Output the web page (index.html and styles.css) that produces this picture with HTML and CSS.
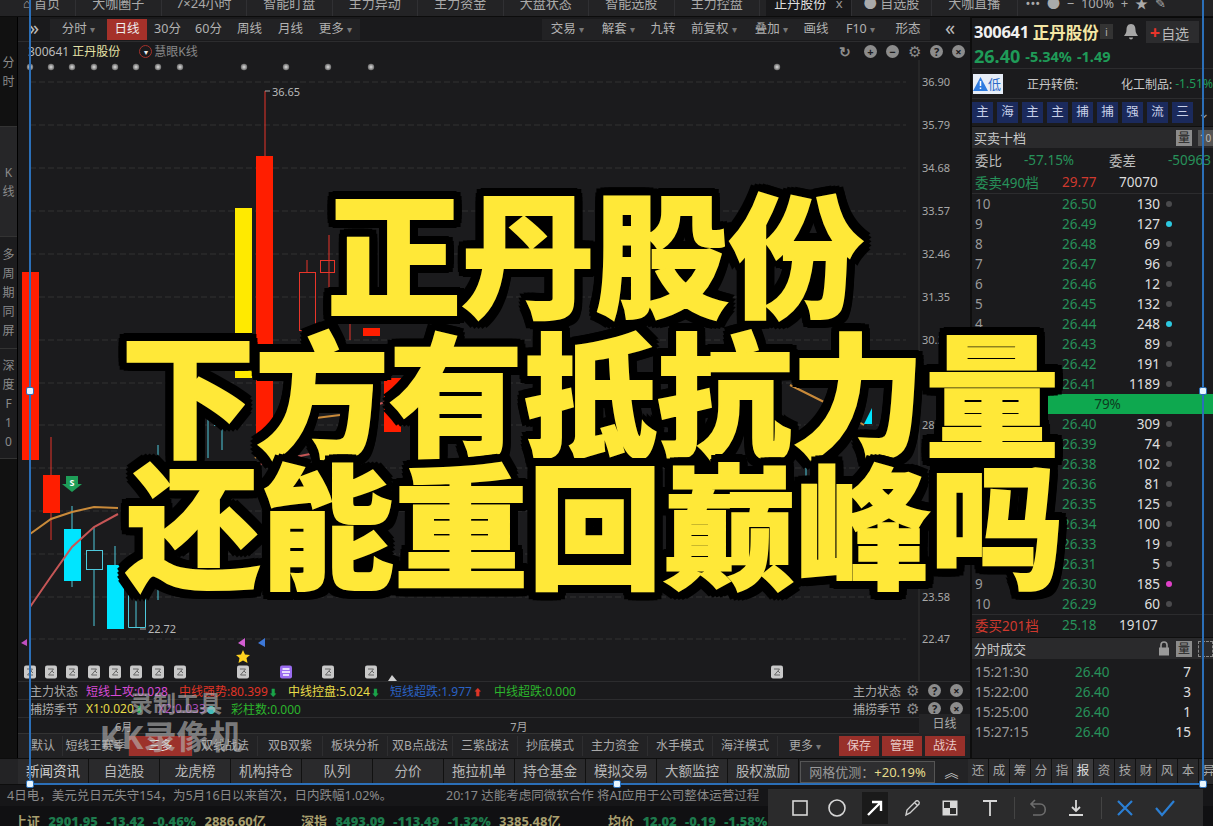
FILE: index.html
```html
<!DOCTYPE html>
<html lang="zh">
<head>
<meta charset="utf-8">
<title>正丹股份</title>
<link rel="stylesheet" href="styles.css">
</head>
<body>
<div class="app">
  <nav class="topbar">
    <span class="top-tab t-home">⌂ 首页</span><span class="top-tab">大咖圈子</span><span class="top-tab">7×24小时</span><span class="top-tab">智能盯盘</span><span class="top-tab">主力异动</span><span class="top-tab">主力资金</span><span class="top-tab">大盘状态</span><span class="top-tab">智能选股</span><span class="top-tab">主力控盘</span><span class="top-tab t-active">正丹股份 <i>x</i></span><span class="top-tab t-fav">● 自选股</span><span class="top-tab">大咖直播</span>
    <span class="top-ctl">••• &nbsp;● &nbsp;− &nbsp;100% &nbsp;+ &nbsp;★ &nbsp;✎</span>
  </nav>
  <div class="main">
    <aside class="rail">
      <div class="rail-item r-1">分<br>时</div>
      <div class="rail-item r-2">K<br>线</div>
      <div class="rail-item r-3">多<br>周<br>期<br>同<br>屏</div>
      <div class="rail-item r-4">深<br>度<br>F<br>1<br>0</div>
    </aside>
    <section class="center">
      <div class="toolbar">
        <span class="tb tb-chev">»</span>
        <span class="tb tb-w56">分时 <b>▾</b></span><span class="tb tb-on">日线</span><span class="tb">30分</span><span class="tb">60分</span><span class="tb">周线</span><span class="tb">月线</span><span class="tb tb-w49">更多 <b>▾</b></span>
        <span class="tb-space"></span>
        <span class="tb tb-w51">交易 <b>▾</b></span><span class="tb tb-w51">解套 <b>▾</b></span><span class="tb tb-w38">九转</span><span class="tb tb-w64">前复权 <b>▾</b></span><span class="tb tb-w51">叠加 <b>▾</b></span><span class="tb tb-w38">画线</span><span class="tb tb-w51">F10 <b>▾</b></span><span class="tb tb-w44">形态</span><span class="tb tb-chev2">«</span>
      </div>
      <div class="chart-head">
        <span class="code">300641 <em>正丹股份</em></span>
        <span class="eye">▾</span><span class="eye-label">慧眼K线</span>
        <span class="head-space"></span>
        <span class="ic ic-plain">↻</span><span class="ic">+</span><span class="ic">−</span><span class="ic ic-gear">⚙</span><span class="ic">?</span><span class="ic ic-end">×</span>
      </div>
      <svg class="chart" viewBox="18 60 952 621" width="952" height="621" xmlns="http://www.w3.org/2000/svg">
        <defs>
          <g id="note"><rect x="-6" y="-6.500" width="12" height="13" rx="2" fill="#c9c9c9"/><path d="M-3 -3H2.500L-2.500 3H3M1 -1L3 1" fill="none" stroke="#666" stroke-width="1"/></g>
          <radialGradient id="dotg"><stop offset="0" stop-color="#e0e0e0"/><stop offset="1" stop-color="#6a6a6a"/></radialGradient>
        </defs>
        <g class="grid">
          <path d="M30 82H906M30 125H906M30 168H906M30 211H906M30 254H906M30 297H906M30 340H906M30 383H906M30 425H906M30 468H906M30 511H906M30 554H906M30 597H906M30 639H906"/>
        </g>
        <path d="M919 60V682" stroke="#333" fill="none"/>
        <g class="prices">
          <text x="922" y="86">36.90</text><text x="922" y="129">35.79</text><text x="922" y="172">34.68</text><text x="922" y="215">33.57</text><text x="922" y="258">32.46</text><text x="922" y="301">31.35</text><text x="922" y="344">30.24</text><text x="922" y="429">28.02</text><text x="922" y="601">23.58</text><text x="922" y="643">22.47</text>
        </g>
        <g fill="url(#dotg)">
          <circle cx="30" cy="67" r="3.200"/><circle cx="51" cy="67" r="3.200"/><circle cx="72" cy="67" r="3.200"/><circle cx="94" cy="67" r="3.200"/><circle cx="115" cy="67" r="3.200"/><circle cx="136" cy="67" r="3.200"/><circle cx="158" cy="67" r="3.200"/><circle cx="180" cy="67" r="3.200"/><circle cx="244" cy="67" r="3.200"/><circle cx="286" cy="67" r="3.200"/><circle cx="328" cy="67" r="3.200"/><circle cx="371" cy="67" r="3.200"/><circle cx="777" cy="67" r="3.200"/>
        </g>
        <!-- red candles -->
        <path d="M51 437V540M265 91V156M329 235V290M307 260V272M350 320V340" stroke="#e8352a" fill="none"/>
        <path d="M265 91H270" stroke="#aaa" fill="none"/>
        <text class="mark" x="272" y="96">36.65</text>
        <rect x="22" y="272" width="17" height="188" fill="#ff1e00"/>
        <rect x="43" y="475" width="17" height="38" fill="#ff1e00"/>
        <rect x="235" y="208" width="17" height="170" fill="#ffea00"/>
        <rect x="256" y="156" width="17" height="300" fill="#ff1e00"/>
        <rect x="299.500" y="272.500" width="16" height="58" fill="none" stroke="#e8352a"/>
        <rect x="320.500" y="260.500" width="14" height="12" fill="none" stroke="#e8352a"/>
        <rect x="363" y="328" width="17" height="8" fill="#ff1e00"/>
        <rect x="384" y="378" width="17" height="54" fill="#ff1e00"/>
        <!-- cyan candles -->
        <path d="M72 506V587M94 527V626M115 546V600M158 445V600M208 416V458M222 427V450M136 560V628M790 450V480" stroke="#4ec9dc" fill="none"/>
        <rect x="64" y="529" width="17" height="52" fill="#00e5ff"/>
        <rect x="86.500" y="550.500" width="16" height="19" fill="#1b1b1d" stroke="#4ec9dc"/>
        <rect x="107" y="565" width="17" height="64" fill="#00e5ff"/>
        <path d="M128.500 590V627.500H145.500V590" fill="none" stroke="#4ec9dc"/>
        <path d="M214 425.500H222M790 458.500H806V480" fill="none" stroke="#4ec9dc"/>
        <path d="M864 424L872 408V424Z" fill="#00e5ff"/>
        <!-- moving averages -->
        <path d="M30 534L51 519L72 512L94 507L118 508" fill="none" stroke="#c98a3a" stroke-width="2"/>
        <path d="M30 607L50 578L72 547L94 527L118 514" fill="none" stroke="#c65656" stroke-width="2"/>
        <path d="M255 458L300 420L340 415M790 385L830 405L864 425" fill="none" stroke="#c98a3a" stroke-width="2"/>
        <path d="M255 465L320 452M340 415L400 398" fill="none" stroke="#c65656" stroke-width="2"/>
        <text class="mark" x="148" y="633">22.72</text>
        <path d="M146 629H140" stroke="#aaa" fill="none"/>
        <!-- markers -->
        <path d="M66 476H78V484H82L72 492L62 484H66Z" fill="#1e9e58"/>
        <text class="s-mark" x="72" y="486">S</text>
        <path d="M27 639V646L21 643Z" fill="#c04fc0"/>
        <path d="M245 638V647L238 643Z" fill="#d35ed3"/>
        <path d="M265 638V647L258 643Z" fill="#3d78d8"/>
        <path d="M243 650L245 654.500L250 655L246.500 658L247.500 663L243 660.500L238.500 663L239.500 658L236 655L241 654.500Z" fill="#ffd21f"/>
        <path d="M388 681L392 675L397 681Z" fill="#cfcfcf"/>
        <g>
          <use href="#note" x="30" y="672"/><use href="#note" x="51" y="672"/><use href="#note" x="72" y="672"/><use href="#note" x="94" y="672"/><use href="#note" x="115" y="672"/><use href="#note" x="136" y="672"/><use href="#note" x="158" y="672"/><use href="#note" x="180" y="672"/><use href="#note" x="243" y="672"/><use href="#note" x="328" y="672"/><use href="#note" x="371" y="672"/><use href="#note" x="777" y="672"/>
          <rect x="280" y="665.500" width="12" height="13" rx="2" fill="#9a6cf0"/><path d="M282.500 669H289.500M282 672H290M283 675H289" stroke="#fff" fill="none" stroke-width="1.300"/>
        </g>
      </svg>
      <div class="ind ind-1">
        <span class="ind-name">主力状态</span>
        <span class="v w93 c-pink">短线上攻:0.028</span>
        <span class="v w109 c-red">中线强势:80.399<b class="c-green">⬇</b></span>
        <span class="v w102 c-yellow">中线控盘:5.024<b class="c-green">⬇</b></span>
        <span class="v w104 c-blue">短线超跌:1.977<b class="c-red">⬆</b></span>
        <span class="v c-lime">中线超跌:0.000</span>
        <span class="ind-right">主力状态<i class="ic ic-gear">⚙</i><i class="ic">?</i><i class="ic">×</i></span>
      </div>
      <div class="ind ind-2">
        <span class="ind-name">捕捞季节</span>
        <span class="v w72 c-yellow">X1:0.020<b class="c-green">⬇</b></span>
        <span class="v w73 c-purple">X2:0.033<b class="c-cyan">●</b></span>
        <span class="v c-lime">彩柱数:0.000</span>
        <span class="ind-right">捕捞季节<i class="ic ic-gear">⚙</i><i class="ic">?</i><i class="ic">×</i></span>
      </div>
      <div class="dates"><span class="d-6">6月</span><span class="d-7">7月</span><span class="d-unit">日线</span></div>
      <div class="strategy">
        <span class="st st-s">默认</span><span class="st st-l">短线王赛季</span><span class="st st-red">三多</span><span class="st">双线战法</span><span class="st">双B双紫</span><span class="st">板块分析</span><span class="st">双B点战法</span><span class="st">三紫战法</span><span class="st">抄底模式</span><span class="st">主力资金</span><span class="st">水手模式</span><span class="st">海洋模式</span><span class="st st-more">更多 <b>▾</b></span>
        <span class="st-btn">保存</span><span class="st-btn">管理</span><span class="st-btn">战法</span>
      </div>
    </section>
    <aside class="side">
      <div class="quote-head">
        <span class="q-code">300641</span><span class="q-name">正丹股份</span><span class="q-i">i</span>
        <svg class="q-bell" width="16" height="18" viewBox="0 0 16 18"><path d="M8 1C4.500 1 3.500 4 3.500 7C3.500 10 2 11.500 1 13H15C14 11.500 12.500 10 12.500 7C12.500 4 11.500 1 8 1ZM6 14.500H10C10 17 6 17 6 14.500Z" fill="#a6a6a6"/></svg>
        <span class="q-add"><b>+</b>自选</span>
      </div>
      <div class="quote-price"><span class="p-big">26.40</span><span class="p-sub">-5.34%</span><span class="p-sub">-1.49</span></div>
      <div class="info-row">
        <span class="risk"><svg width="15" height="14" viewBox="0 0 15 14"><path d="M7.500 0L15 14H0Z" fill="#2e7be0"/><path d="M7.500 4V9M7.500 10.500V12" stroke="#fff" stroke-width="1.500"/></svg>低</span>
        <span class="info-a">正丹转债:</span><span class="info-b">化工制品:</span><span class="info-c">-1.51%</span>
      </div>
      <div class="tags">
        <span>主</span><span>海</span><span>主</span><span>主</span><span>捕</span><span>捕</span><span>强</span><span>流</span><span>三</span><i>⌄</i>
      </div>
      <div class="sec-head"><span>买卖十档</span><span class="sec-tools"><b>量</b><b class="b-cut">10</b></span></div>
      <div class="wei"><span>委比</span><span class="g w-1">-57.15%</span><span class="w-2">委差</span><span class="g w-3">-50963</span></div>
      <div class="lvl"><span class="g lvl-a">委卖490档</span><span class="r lvl-b">29.77</span><span class="lvl-c">70070</span></div>
      <div class="book">
        <div class="ob"><span>10</span><span class="g">26.50</span><span class="q">130</span><i></i></div>
        <div class="ob"><span>9</span><span class="g">26.49</span><span class="q">127</span><i class="cy"></i></div>
        <div class="ob"><span>8</span><span class="g">26.48</span><span class="q">69</span><i></i></div>
        <div class="ob"><span>7</span><span class="g">26.47</span><span class="q">96</span><i></i></div>
        <div class="ob"><span>6</span><span class="g">26.46</span><span class="q">12</span><i></i></div>
        <div class="ob"><span>5</span><span class="g">26.45</span><span class="q">132</span><i></i></div>
        <div class="ob"><span>4</span><span class="g">26.44</span><span class="q">248</span><i class="cy"></i></div>
        <div class="ob"><span>3</span><span class="g">26.43</span><span class="q">89</span><i></i></div>
        <div class="ob"><span>2</span><span class="g">26.42</span><span class="q">191</span><i></i></div>
        <div class="ob"><span>1</span><span class="g">26.41</span><span class="q">1189</span><i></i></div>
        <div class="ratio">79%</div>
        <div class="ob"><span>1</span><span class="g">26.40</span><span class="q">309</span><i></i></div>
        <div class="ob"><span>2</span><span class="g">26.39</span><span class="q">74</span><i></i></div>
        <div class="ob"><span>3</span><span class="g">26.38</span><span class="q">102</span><i></i></div>
        <div class="ob"><span>4</span><span class="g">26.36</span><span class="q">81</span><i></i></div>
        <div class="ob"><span>5</span><span class="g">26.35</span><span class="q">125</span><i></i></div>
        <div class="ob"><span>6</span><span class="g">26.34</span><span class="q">100</span><i></i></div>
        <div class="ob"><span>7</span><span class="g">26.33</span><span class="q">19</span><i></i></div>
        <div class="ob"><span>8</span><span class="g">26.31</span><span class="q">5</span><i></i></div>
        <div class="ob"><span>9</span><span class="g">26.30</span><span class="q">185</span><i class="pk"></i></div>
        <div class="ob"><span>10</span><span class="g">26.29</span><span class="q">60</span><i></i></div>
      </div>
      <div class="lvl lvl-buy"><span class="r lvl-a">委买201档</span><span class="g lvl-b">25.18</span><span class="lvl-c">19107</span></div>
      <div class="sec-head sec-2"><span>分时成交</span><span class="sec-tools"><svg width="12" height="15" viewBox="0 0 12 15"><path d="M3 7V4C3 0 9 0 9 4V7" fill="none" stroke="#9a9a9a" stroke-width="1.600"/><rect x="1" y="6.500" width="10" height="8" fill="#9a9a9a"/></svg><b>量</b><b class="b-cut"></b></span></div>
      <div class="trades">
        <div class="tr"><span>15:21:30</span><span class="g">26.40</span><span class="q">7</span></div>
        <div class="tr"><span>15:22:00</span><span class="g">26.40</span><span class="q">3</span></div>
        <div class="tr"><span>15:25:00</span><span class="g">26.40</span><span class="q">1</span></div>
        <div class="tr"><span>15:27:15</span><span class="g">26.40</span><span class="q">15</span></div>
      </div>
    </aside>
  </div>
  <div class="tabs">
    <span class="tab tab-first">新闻资讯</span><span class="tab">自选股</span><span class="tab">龙虎榜</span><span class="tab">机构持仓</span><span class="tab">队列</span><span class="tab">分价</span><span class="tab">拖拉机单</span><span class="tab">持仓基金</span><span class="tab">模拟交易</span><span class="tab">大额监控</span><span class="tab">股权激励</span>
    <span class="grid-opt">网格优测：<b>+20.19%</b></span><span class="tab-up">︽</span>
    <span class="letters"><span>还</span><span>成</span><span>筹</span><span>分</span><span>指</span><span class="l-on">报</span><span>资</span><span>技</span><span>财</span><span>风</span><span>本</span><span>异</span></span>
  </div>
  <div class="ticker"><span class="tk-a">4日电，美元兑日元失守154，为5月16日以来首次，日内跌幅1.02%。</span><span>20:17 达能考虑同微软合作 将AI应用于公司整体运营过程</span></div>
  <div class="indices">
    <span class="idx idx-1"><em>上证</em> <b>2901.95</b> <b>-13.42</b> <b>-0.46%</b> <u>2886.60亿</u></span>
    <span class="idx idx-2"><em>深指</em> <b>8493.09</b> <b>-113.49</b> <b>-1.32%</b> <u>3385.48亿</u></span>
    <span class="idx"><em>均价</em> <b>12.02</b> <b>-0.19</b> <b>-1.58%</b></span>
  </div>

  <div class="watermark"><div class="wm-1">录制工具</div><div class="wm-2">KK录像机</div></div>
  <div class="headline">
    <div class="hl-1">正丹股份</div>
    <div class="hl-2">下方有抵抗力量</div>
    <div>还能重回巅峰吗</div>
  </div>
  <div class="selection">
    <i class="hd hd-l"></i><i class="hd hd-r"></i><i class="hd hd-bl"></i><i class="hd hd-b"></i><i class="hd hd-br"></i>
  </div>
  <div class="recorder">
    <svg width="16" height="16" viewBox="0 0 16 16"><rect x="1" y="1" width="14" height="14" fill="none" stroke="#d8d8d8" stroke-width="1.600"/></svg>
    <svg width="18" height="18" viewBox="0 0 18 18"><circle cx="9" cy="9" r="8" fill="none" stroke="#d8d8d8" stroke-width="1.600"/></svg>
    <span class="rec-on"><svg width="18" height="18" viewBox="0 0 18 18"><path d="M2 16L15 3M6 3H15V12" fill="none" stroke="#fff" stroke-width="2.400"/></svg></span>
    <svg width="18" height="18" viewBox="0 0 18 18"><path d="M2 16L3 11L12 2C14 1 16 3 15 5L6 14Z M10.500 3.500L13.500 6.500" fill="none" stroke="#cfcfcf" stroke-width="1.400"/></svg>
    <svg width="16" height="16" viewBox="0 0 16 16"><rect x="0.500" y="0.500" width="15" height="15" fill="#d8d8d8"/><rect x="2" y="2" width="6" height="6" fill="#2b2b2b"/><rect x="8" y="8" width="6" height="6" fill="#2b2b2b"/></svg>
    <svg class="rec-t" width="16" height="17" viewBox="0 0 16 17"><path d="M1 2H15M8 2V17" fill="none" stroke="#d8d8d8" stroke-width="1.800"/></svg>
    <i class="rec-sep"></i>
    <svg width="18" height="18" viewBox="0 0 18 18"><path d="M6 1L2 5L6 9M2 5H11C18 5 18 16 11 16H4" fill="none" stroke="#6d6d6d" stroke-width="1.600"/></svg>
    <svg width="18" height="18" viewBox="0 0 18 18"><path d="M9 1V11M5 8L9 12L13 8M2 16H16" fill="none" stroke="#d8d8d8" stroke-width="1.800"/></svg>
    <i class="rec-sep"></i>
    <svg width="18" height="18" viewBox="0 0 18 18"><path d="M2 2L16 16M16 2L2 16" fill="none" stroke="#2b7fd4" stroke-width="2.200"/></svg>
    <svg width="22" height="18" viewBox="0 0 22 18"><path d="M2 9L8 16L20 2" fill="none" stroke="#2b7fd4" stroke-width="2.200"/></svg>
  </div>
</div>
</body>
</html>
```

FILE: styles.css
```css
* { box-sizing: border-box; }
html, body { margin: 0; padding: 0; background: #1a1a1c; }
body { font-family: "Noto Sans", "Noto Sans CJK SC", sans-serif; font-size: 12px; color: #bdbdbd; }
i, em { font-style: normal; }
.app { position: relative; width: 1213px; height: 826px; overflow: hidden; display: flex; flex-direction: column; background: #1a1a1c; }

/* top tabs */
.topbar { flex: none; height: 17px; display: flex; background: #232325; border-bottom: 1px solid #0c0c0c; overflow: hidden; }
.top-tab { width: 85.500px; flex: none; line-height: 7px; font-size: 13px; text-align: center; color: #aaa; border-right: 1px solid #303033; }
.t-home { width: 76px; padding-left: 8px; }
.t-active { background: #18181a; color: #ddd; width: 86px; margin-left: 6px; }
.t-active i { color: #999; margin-left: 6px; }
.t-fav { width: 80px; }
.top-ctl { margin-left: 8px; line-height: 7px; color: #aaa; font-size: 13px; white-space: nowrap; }

/* main */
.main { flex: none; height: 741px; display: flex; }
.rail { flex: none; width: 18px; background: #111; border-right: 1px solid #000; color: #8a8a8a; font-size: 12px; text-align: center; line-height: 19px; display: flex; flex-direction: column; }
.rail-item { display: flex; align-items: center; justify-content: center; border-bottom: 1px solid #333; }
.r-1 { height: 110px; }
.r-2 { height: 110px; background: #262628; }
.r-3 { height: 112px; background: #1c1c1e; }
.r-4 { height: 110px; background: #1c1c1e; }

.center { flex: none; width: 952px; display: flex; flex-direction: column; }
.toolbar { flex: none; height: 25px; display: flex; align-items: center; border-bottom: 1px solid #2c2c2e; padding-top: 1px; }
.tb { flex: none; width: 41px; height: 21px; line-height: 20px; text-align: center; color: #b2b2b2; font-size: 12.500px; white-space: nowrap; background: #222224; }
.tb b { color: #777; font-size: 10px; font-weight: 400; }
.tb-chev { width: 32px; background: none; font-size: 20px; line-height: 17px; color: #bbb; }
.tb-w56 { width: 57px; }
.tb-w49 { width: 49px; }
.tb-on { background: #a5312a; color: #eee; width: 40px; }
.tb-space { flex: 1; }
.tb-w51 { width: 51px; }
.tb-w38 { width: 38px; }
.tb-w64 { width: 64px; }
.tb-w44 { width: 44px; }
.tb-chev2 { width: 40px; background: none; font-size: 20px; line-height: 17px; color: #bbb; }

.chart-head { flex: none; height: 18px; display: flex; align-items: center; padding-left: 10px; font-size: 12px; color: #aaa; }
.code { color: #bbb; }
.code em { color: #e6e2a6; }
.eye { width: 13px; height: 13px; margin-left: 19px; border: 1px solid #a5312a; border-radius: 50%; color: #eee; font-size: 8px; line-height: 11px; text-align: center; }
.eye-label { margin-left: 2px; color: #888; }
.head-space { flex: 1; }
.ic { display: inline-block; flex: none; width: 13px; height: 13px; margin-right: 9px; border-radius: 50%; background: #8c8c8c; color: #1a1a1c; font-size: 11px; line-height: 13px; text-align: center; font-weight: 700; }
.ic-plain { background: none; color: #8c8c8c; font-size: 14px; margin-right: 13px; }
.ic-gear { background: none; color: #8c8c8c; font-size: 15px; font-weight: 400; }
.ic-end { margin-right: 5px; }
.chart { flex: none; display: block; background: #1b1b1d; }
.grid path { stroke: #333; stroke-dasharray: 6 3; fill: none; }
.prices text { fill: #a8a8a8; font-size: 11px; font-family: "Noto Sans", sans-serif; }
.mark { fill: #b8b8b8; font-size: 11px; font-family: "Noto Sans", sans-serif; }
.s-mark { fill: #fff; font-size: 9px; font-weight: 700; text-anchor: middle; font-family: "Noto Sans", sans-serif; }

.ind { flex: none; height: 18px; display: flex; align-items: center; padding-left: 12px; border-top: 1px solid #2c2c2e; font-size: 12px; white-space: nowrap; }
.ind-name { width: 56px; flex: none; color: #aaa; }
.v b { font-size: 9px; margin-left: 1px; }
.w93 { width: 93px; } .w109 { width: 109px; } .w102 { width: 102px; } .w104 { width: 104px; } .w72 { width: 72px; } .w73 { width: 73px; }
.ind-right { margin-left: auto; color: #aaa; display: flex; align-items: center; padding-right: 7px; }
.ind-right .ic { margin-left: 9px; margin-right: 0; }
.ind-right .ic-gear { margin-left: 5px; }
.c-pink { color: #d84bd8; } .c-red { color: #e03426; } .c-green { color: #19a34a; } .c-yellow { color: #e8dc48; } .c-blue { color: #2a62c4; } .c-lime { color: #2cb52c; } .c-purple { color: #a74bb8; } .c-cyan { color: #4bb; }

.dates { flex: none; height: 16px; position: relative; border-top: 1px solid #2c2c2e; font-size: 11px; color: #aaa; display: flex; align-items: center; line-height: 12px; }
.d-6 { margin-left: 97px; padding-top: 3px; }
.d-7 { margin-left: 378px; padding-top: 3px; }
.d-unit { margin-left: auto; width: 51px; height: 20px; margin-top: -4px; background: #242426; text-align: center; line-height: 20px; font-size: 12px; }

.strategy { flex: 1; display: flex; align-items: center; background: #222224; border-top: 1px solid #333; padding-left: 6px; font-size: 12px; white-space: nowrap; }
.st { width: 65px; flex: none; text-align: center; color: #aaa; border-right: 1px solid #2e2e30; line-height: 20px; }
.st-s { width: 39px; }
.st-l { width: 66px; }
.st-red { width: 64px; background: #9c312b; color: #eee; }
.st-more { width: 54px; border: 0; }
.st-more b { font-size: 10px; font-weight: 400; color: #777; }
.st-btn { flex: none; width: 40px; height: 20px; margin-left: 3px; background: #98302a; color: #e8c9c6; text-align: center; line-height: 20px; }
.st-more + .st-btn { margin-left: 7px; }

/* side */
.side { flex: none; width: 243px; background: #1b1b1d; border-left: 2px solid #0d0d0d; overflow: hidden; font-size: 14px; }
.quote-head { height: 28px; display: flex; align-items: center; padding-left: 2px; border-top: 1px solid #0a0a0a; }
.q-code { font-weight: 700; font-size: 16.500px; color: #f0f0f0; letter-spacing: -0.300px; }
.q-name { font-weight: 700; font-size: 16.500px; color: #f4e7a4; margin-left: 4px; }
.q-i { width: 13px; height: 15px; margin-left: 1px; flex: none; background: #333; color: #aaa; font-size: 11px; line-height: 15px; text-align: center; }
.q-bell { margin-left: 10px; flex: none; }
.q-add { margin-left: 7px; width: 53px; height: 22px; flex: none; background: #2c2c2e; color: #b8b8b8; line-height: 22px; font-size: 14px; white-space: nowrap; padding-left: 4px; }
.q-add b { color: #e8352a; font-size: 18px; margin-right: 1px; }
.quote-price { height: 22px; display: flex; align-items: center; gap: 5px; padding-left: 2px; color: #1f9b58; font-weight: 700; }
.p-big { font-size: 18px; }
.p-sub { font-size: 14.500px; }
.info-row { height: 31px; margin-top: 1px; display: flex; align-items: center; border-top: 1px solid #2c2c2e; border-bottom: 1px solid #2c2c2e; font-size: 12px; color: #c8c8c8; white-space: nowrap; }
.risk { width: 30px; height: 20px; margin-left: 1px; background: #e6edf7; color: #2e6bc8; display: flex; align-items: center; font-size: 13px; }
.info-a { margin-left: 24px; width: 94px; }
.info-c { color: #1f9b58; margin-left: 3px; }
.tags { height: 27px; display: flex; align-items: center; padding-left: 0; gap: 4px; }
.tags span { flex: none; width: 21px; height: 21px; background: #1b2a5c; color: #c8d0e8; font-size: 12.500px; text-align: center; line-height: 20px; }
.tags i { color: #999; font-size: 14px; margin-left: 1px; }
.sec-head { height: 22px; display: flex; align-items: center; justify-content: space-between; padding-left: 2px; background: #2a2a2c; color: #c8c8c8; font-size: 13px; border-top: 1px solid #0f0f0f; }
.sec-tools { display: flex; align-items: center; gap: 6px; }
.sec-tools b { width: 16px; height: 16px; background: #8c8c8c; color: #222; font-size: 12px; line-height: 16px; text-align: center; font-weight: 400; flex: none; }
.sec-tools .b-cut { width: 15px; background: #555; color: #bbb; font-size: 10px; }
.sec-2 .b-cut { background: none; border: 1px dashed #888; }
.wei { height: 23px; display: flex; align-items: center; padding-left: 3px; font-size: 13.500px; color: #bbb; white-space: nowrap; }
.g { color: #27925a; }
.r { color: #d0392e; }
.w-1 { margin-left: 22px; width: 85px; }
.w-3 { margin-left: 32px; }
.lvl { height: 23px; display: flex; align-items: center; padding-left: 3px; font-size: 13.500px; color: #ddd; border-bottom: 1px solid #2c2c2e; white-space: nowrap; }
.lvl-a { width: 87px; }
.lvl-b { width: 57px; }
.ob { height: 20px; display: grid; grid-template-columns: 87px 35px 63px 14px; align-items: center; padding-left: 3px; font-size: 13.500px; line-height: 20px; }
.ob > span:first-child { color: #999; }
.q { color: #e0e0e0; text-align: right; }
.ob i { width: 6px; height: 6px; border-radius: 50%; background: #4a4a4c; margin-left: 6px; }
.ob i.cy { background: #2cc8e0; }
.ob i.pk { background: #e040c8; }
.ratio { height: 20px; margin-left: 30px; background: #0ea84f; color: #0d3a20; font-size: 13.500px; text-align: center; line-height: 20px; }
.lvl-buy { height: 20px; border-bottom: 0; border-top: 1px solid #2c2c2e; }
.sec-2 { margin-top: 3px; }
.trades { padding-top: 3px; }
.tr { height: 20px; display: grid; grid-template-columns: 100px 50px 66px; align-items: center; padding-left: 3px; font-size: 13.500px; line-height: 20px; color: #999; }

/* bottom tabs */
.tabs { flex: none; height: 26px; display: flex; align-items: center; background: #232325; border-top: 1px solid #0d0d0d; font-size: 13.500px; padding-left: 18px; white-space: nowrap; }
.tab { flex: none; width: 71px; height: 25px; text-align: center; line-height: 24px; color: #b8b8b8; border-right: 1px solid #111; background: #2a2a2c; }
.tab-first { color: #d0d0d0; }
.grid-opt { flex: none; width: 135px; height: 22px; margin-left: 1px; border: 1px solid #555; background: #2e2e30; text-align: center; line-height: 20px; color: #999; font-size: 13px; }
.grid-opt b { color: #e6dc8c; font-weight: 400; }
.tab-up { flex: none; width: 33px; text-align: center; color: #ccc; font-size: 14px; line-height: 20px; }
.letters { display: flex; flex: none; }
.letters span { width: 21px; height: 25px; line-height: 24px; text-align: center; font-size: 12.500px; color: #a8a8a8; border-right: 1px solid #111; background: #2a2a2c; }
.letters .l-on { background: #3a3a3c; color: #ddd; }

.ticker { flex: none; height: 22px; display: flex; align-items: center; padding: 0 0 2px 7px; background: #161618; color: #8a8a8a; font-size: 12.500px; white-space: nowrap; border-top: 1px solid #0d0d0d; }
.tk-a { width: 439px; flex: none; }
.indices { flex: none; height: 20px; display: flex; background: #101012; padding: 5px 0 0 14px; font-size: 13px; font-weight: 700; white-space: nowrap; line-height: 20px; overflow: hidden; }
.idx em { color: #a89f6e; }
.idx b { color: #1d7a4c; margin-left: 5px; }
.idx u { color: #a89f6e; text-decoration: none; margin-left: 5px; }
.idx-1 { width: 287px; flex: none; }
.idx-2 { width: 307px; flex: none; }

/* watermark */
.watermark { position: absolute; left: 96px; top: 690px; width: 150px; text-align: center; color: rgba(185,185,185,.62); font-weight: 700; white-space: nowrap; }
.wm-1 { font-size: 23px; line-height: 27px; margin-left: 10px; }
.wm-2 { font-size: 33px; line-height: 40px; }

/* overlay title */
.headline { position: absolute; left: 0; top: 193px; width: 1190px; text-align: center; font-family: "Noto Sans CJK SC", sans-serif; font-weight: 900; font-size: 134px; line-height: 131px; color: #ffe838; white-space: nowrap; -webkit-text-stroke: 2px #ffe838;
  text-shadow: 9px 0 #000, -9px 0 #000, 0 9px #000, 0 -9px #000, 8px 8px #000, -8px 8px #000, 8px -8px #000, -8px -8px #000, 9px 4px #000, -9px 4px #000, 9px -4px #000, -9px -4px #000, 4px 9px #000, -4px 9px #000, 4px -9px #000, -4px -9px #000; }
.hl-1 { margin-top: -9px; margin-bottom: 9px; }
.hl-2 { margin-left: -10px; }

/* capture selection */
.selection { position: absolute; left: 29px; top: -3px; width: 1175px; height: 788px; border: 2px solid #2b6fb8; pointer-events: none; }
.hd { position: absolute; width: 8px; height: 8px; background: #e8f6ff; border: 1px solid #2b6fb8; border-radius: 2px; }
.hd-l { left: -5px; top: 388px; }
.hd-r { right: -5px; top: 388px; }
.hd-bl { left: -5px; bottom: -5px; }
.hd-b { left: 582px; bottom: -5px; }
.hd-br { right: -5px; bottom: -5px; }

/* recorder toolbar */
.recorder { position: absolute; left: 768px; top: 789px; width: 435px; height: 37px; background: #2b2b2c; display: flex; align-items: center; padding-left: 24px; }
.recorder svg { flex: none; }
.recorder > svg, .recorder > .rec-on { margin-right: 20px; }
.rec-on { width: 26px; height: 32px; background: #1a1a1a; display: flex; align-items: center; justify-content: center; margin-left: -4px; }
.recorder > .rec-on { margin-right: 16px; }
.recorder > .rec-t { margin-left: 4px; }
.rec-sep { width: 1px; height: 22px; background: #444; margin: 0 14px 0 -4px; }
```
